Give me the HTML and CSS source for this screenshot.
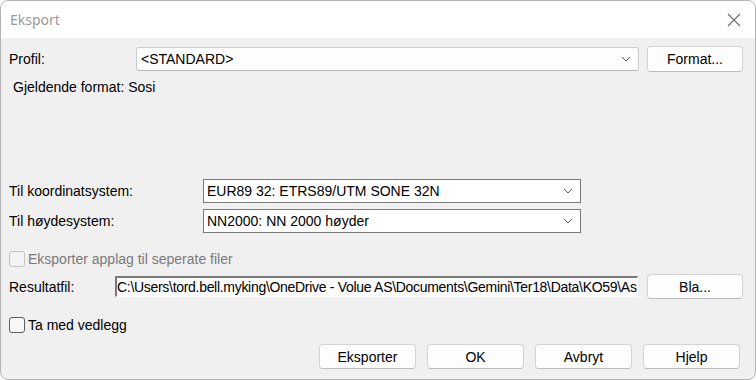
FILE: index.html
```html
<!DOCTYPE html>
<html lang="no">
<head>
    <meta charset="UTF-8">
    <title>Eksport</title>
    <link rel="stylesheet" href="styles.css">
</head>
<body>
    <div class="window">
        <div class="titlebar">
            <span class="title">Eksport</span>
            <svg class="close" width="14" height="14" viewBox="0 0 14 14">
                <path d="M1 1 L13 13 M13 1 L1 13" stroke="#6b6b6b" stroke-width="1.1" fill="none"/>
            </svg>
        </div>

        <div class="content">
            <div class="row row-profil">
                <label class="lbl lbl-profil">Profil:</label>
                <div class="combo combo-modern">
                    <span>&lt;STANDARD&gt;</span>
                    <svg class="chev" width="10" height="6" viewBox="0 0 10 6"><path d="M1 1 L5 5 L9 1" stroke="#555" fill="none"/></svg>
                </div>
                <button class="btn btn-side">Format...</button>
            </div>

            <div class="row row-info">Gjeldende format: Sosi</div>

            <div class="row row-koord">
                <label class="lbl lbl-wide">Til koordinatsystem:</label>
                <div class="combo combo-classic">
                    <span>EUR89 32: ETRS89/UTM SONE 32N</span>
                    <svg class="chev" width="10" height="6" viewBox="0 0 10 6"><path d="M1 1 L5 5 L9 1" stroke="#555" fill="none"/></svg>
                </div>
            </div>

            <div class="row row-hoyde">
                <label class="lbl lbl-wide">Til høydesystem:</label>
                <div class="combo combo-classic">
                    <span>NN2000: NN 2000 høyder</span>
                    <svg class="chev" width="10" height="6" viewBox="0 0 10 6"><path d="M1 1 L5 5 L9 1" stroke="#555" fill="none"/></svg>
                </div>
            </div>

            <div class="row row-check disabled">
                <span class="checkbox"></span>
                <span>Eksporter applag til seperate filer</span>
            </div>

            <div class="row row-result">
                <label class="lbl lbl-result">Resultatfil:</label>
                <div class="field">C:\Users\tord.bell.myking\OneDrive - Volue AS\Documents\Gemini\Ter18\Data\KO59\As</div>
                <button class="btn btn-side">Bla...</button>
            </div>

            <div class="row row-check row-vedlegg">
                <span class="checkbox"></span>
                <span>Ta med vedlegg</span>
            </div>

            <div class="row row-buttons">
                <button class="btn">Eksporter</button>
                <button class="btn">OK</button>
                <button class="btn">Avbryt</button>
                <button class="btn">Hjelp</button>
            </div>
        </div>
    </div>
</body>
</html>
```

FILE: styles.css
```css
html, body {
    margin: 0;
    padding: 0;
    background-color: #fff;
}

body {
    font-family: 'Liberation Sans', Arial, sans-serif;
    font-size: 14px;
    color: #000;
}

.window {
    width: 756px;
    height: 380px;
    box-sizing: border-box;
    border: 1px solid #b4b4b4;
    border-radius: 8px;
    overflow: hidden;
    display: flex;
    flex-direction: column;
    background-color: #f0f0f0;
}

.titlebar {
    height: 36px;
    flex-shrink: 0;
    background-color: #fff;
    display: flex;
    align-items: center;
    justify-content: space-between;
    padding: 0 14px 1px 9px;
}

.title {
    font-family: 'Noto Sans', sans-serif;
    font-size: 14px;
    color: #9a9a9a;
}

.close {
    margin-top: 2px;
}

.content {
    flex: 1;
    padding: 8px 0 0 8px;
    display: flex;
    flex-direction: column;
}

.row {
    display: flex;
    align-items: center;
    flex-shrink: 0;
}

.lbl {
    flex-shrink: 0;
}

.lbl-profil { width: 127px; }
.lbl-wide { width: 194px; }
.lbl-result { width: 106px; }

.row-profil { height: 26px; }

.row-info {
    height: 18px;
    margin-top: 6px;
    margin-bottom: 1px;
    padding-left: 4px;
}

.row-koord {
    height: 24px;
    margin-top: 82px;
}

.row-hoyde {
    height: 24px;
    margin-top: 6px;
}

.row-check {
    height: 16px;
    margin-top: 18px;
    gap: 3px;
}

.row-result {
    height: 25px;
    margin-top: 7px;
}

.row-vedlegg {
    margin-top: 18px;
}

.row-buttons {
    height: 25px;
    margin-top: 11px;
    justify-content: flex-end;
    padding-right: 15px;
    gap: 11px;
}

.combo {
    height: 24px;
    box-sizing: border-box;
    display: flex;
    align-items: center;
    justify-content: space-between;
    padding: 0 6px 0 4px;
}

.combo-modern {
    width: 503px;
    border: 1px solid #cdcdcd;
    border-bottom-color: #b8b8b8;
    border-radius: 3px;
    background-color: #fdfdfd;
}

.combo-classic {
    width: 378px;
    border: 1px solid #7a7a7a;
    background-color: #fff;
    padding-left: 3px;
}

.chev {
    margin-right: 1px;
}

.btn {
    width: 97px;
    height: 25px;
    box-sizing: border-box;
    font-family: 'Liberation Sans', Arial, sans-serif;
    font-size: 14px;
    color: #000;
    background-color: #fdfdfd;
    border: 1px solid #d3d3d3;
    border-bottom-color: #bdbdbd;
    border-radius: 4px;
    padding: 0;
}

.btn-side {
    width: 96px;
    height: 26px;
    margin-left: 8px;
}

.row-result .btn-side {
    margin-left: 9px;
    height: 25px;
}

.checkbox {
    width: 16px;
    height: 16px;
    box-sizing: border-box;
    border: 1px solid #5d5d5d;
    border-radius: 3px;
    background-color: #f7f7f7;
    flex-shrink: 0;
}

.disabled {
    color: #7a7a7a;
}

.disabled .checkbox {
    border-color: #c4c4c4;
    background-color: #f3f3f3;
}

.field {
    width: 523px;
    height: 21px;
    box-sizing: border-box;
    border-top: 2px solid #7a7a7a;
    border-left: 2px solid #7a7a7a;
    border-right: 1px solid #fff;
    border-bottom: 1px solid #fff;
    background-color: #fbfbfb;
    white-space: nowrap;
    overflow: hidden;
    letter-spacing: -0.3px;
    line-height: 18px;
}
```
